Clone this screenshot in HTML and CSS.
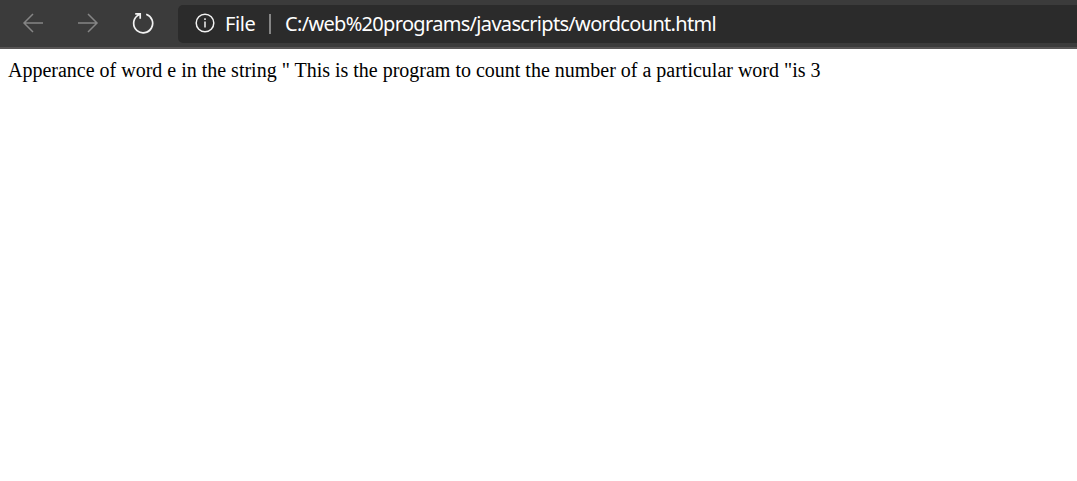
FILE: index.html
```html
<!DOCTYPE html>
<html lang="en">
<head>
<meta charset="utf-8">
<title>wordcount.html</title>
<link rel="stylesheet" href="styles.css">
</head>
<body>
<header class="toolbar">
  <nav class="controls">
    <svg class="icon muted" viewBox="0 0 22 22"><path d="M21 11H2M11 2L2 11l9 9"/></svg>
    <svg class="icon muted" viewBox="0 0 22 22"><path d="M1 11h19M11 2l9 9-9 9"/></svg>
    <svg class="icon reload" viewBox="0 0 22 22"><path d="M14.2 2.3A9.5 9.5 0 1 1 5.2 3.9L8 2M3.2 1.8h5v5"/></svg>
  </nav>
  <div class="address">
    <svg class="info" viewBox="0 0 20 20"><circle cx="10" cy="10" r="8.8"/><path d="M10 8.5v6M10 5.2v1.8"/></svg>
    <span class="scheme">File</span>
    <span class="divider"></span>
    <span class="url">C:/web%20programs/javascripts/wordcount.html</span>
  </div>
</header>
<main class="page">Apperance of word e in the string " This is the program to count the number of a particular word "is 3</main>
</body>
</html>
```
FILE: styles.css
```css
body {
  margin: 0;
  background: #fff;
  overflow: hidden;
}
.toolbar {
  box-sizing: border-box;
  display: flex;
  height: 49px;
  padding-top: 5px;
  background: #3b3b3b;
  border-bottom: 2px solid #575555;
}
.controls {
  display: flex;
  gap: 33px;
  width: 156px;
  height: 36px;
  padding-left: 22px;
  align-items: center;
}
.icon {
  flex: none;
  width: 22px;
  height: 22px;
  fill: none;
  stroke: #f2f2f2;
  stroke-width: 1.5;
}
.muted {
  stroke: #858585;
}
.reload {
  stroke-width: 1.7;
}
.address {
  display: flex;
  flex: 1;
  align-items: center;
  height: 38px;
  box-sizing: border-box;
  padding-left: 17px;
  background: #2b2b2b;
  border-radius: 5px 0 0 5px;
  color: #fff;
  font: 20px/36px "Noto Sans", "Open Sans", sans-serif;
  white-space: nowrap;
}
.info {
  width: 20px;
  height: 20px;
  margin: 0 10px 2px 0;
  fill: none;
  stroke: #f2f2f2;
  stroke-width: 1.5;
}
.scheme {
  width: 44px;
  letter-spacing: -0.4px;
}
.divider {
  width: 2px;
  height: 20px;
  margin-right: 14px;
  background: #858585;
}
.url {
  letter-spacing: -0.68px;
}
.page {
  padding: 10px 8px;
  color: #000;
  font: 20px/22px "Liberation Serif", "Times New Roman", serif;
  letter-spacing: -0.005px;
  white-space: nowrap;
}
```
